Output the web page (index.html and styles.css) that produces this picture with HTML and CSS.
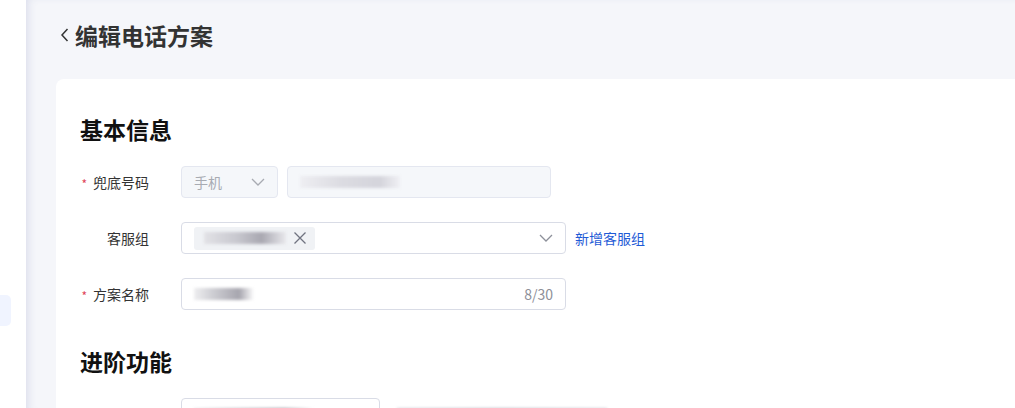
FILE: index.html
```html
<!DOCTYPE html>
<html lang="zh-CN">
<head>
  <meta charset="UTF-8">
  <meta name="viewport" content="width=device-width, initial-scale=1.0">
  <title>编辑电话方案</title>
  <link rel="stylesheet" href="styles.css">
</head>
<body>
  <div class="layout">
    <!-- 左侧菜单（收起状态） -->
    <aside class="sidebar">
      <div class="menu-active"></div>
    </aside>

    <main class="content">
      <div class="page-header">
        <svg class="back-icon" width="10" height="16" viewBox="0 0 10 16">
          <path d="M7.5 2 L2 8 L7.5 14" fill="none" stroke="#333" stroke-width="1.5"/>
        </svg>
        <h1>编辑电话方案</h1>
      </div>

      <section class="card">
        <h2>基本信息</h2>

        <div class="form-item">
          <label class="form-label"><span class="required">*</span>兜底号码</label>
          <div class="form-field">
            <div class="select select-phone is-disabled">
              <span class="select-text">手机</span>
              <svg class="arrow" width="14" height="8" viewBox="0 0 14 8">
                <path d="M1 1 L7 7 L13 1" fill="none" stroke="#a8abb2" stroke-width="1.3"/>
              </svg>
            </div>
            <div class="input input-number is-disabled">
              <span class="blur-text blur-light" style="width: 100px"></span>
            </div>
          </div>
        </div>

        <div class="form-item">
          <label class="form-label">客服组</label>
          <div class="form-field">
            <div class="select select-wide">
              <span class="tag">
                <span class="blur-text" style="width: 82px"></span>
                <svg class="tag-close" width="14" height="14" viewBox="0 0 14 14">
                  <path d="M1.5 1.5 L12.5 12.5 M12.5 1.5 L1.5 12.5" fill="none" stroke="#707380" stroke-width="1.3"/>
                </svg>
              </span>
              <svg class="arrow" width="14" height="8" viewBox="0 0 14 8">
                <path d="M1 1 L7 7 L13 1" fill="none" stroke="#8d909a" stroke-width="1.3"/>
              </svg>
            </div>
            <a class="link" href="#">新增客服组</a>
          </div>
        </div>

        <div class="form-item">
          <label class="form-label"><span class="required">*</span>方案名称</label>
          <div class="form-field">
            <div class="input input-wide">
              <span class="blur-text blur-dark" style="width: 60px"></span>
              <span class="count">8/30</span>
            </div>
          </div>
        </div>

        <h2 class="section-gap">进阶功能</h2>

        <div class="form-item">
          <label class="form-label"></label>
          <div class="form-field">
            <div class="input input-small">
              <span class="blur-text blur-dark" style="width: 120px"></span>
            </div>
            <span class="blur-text blur-tip" style="width: 210px"></span>
          </div>
        </div>
      </section>
    </main>
  </div>
</body>
</html>
```

FILE: styles.css
```css
* {
  box-sizing: border-box;
  margin: 0;
  padding: 0;
}

body {
  font-family: "Noto Sans CJK SC", "Noto Sans", sans-serif;
  color: #333;
  background-color: #fff;
  overflow: hidden;
}

.layout {
  display: flex;
  height: 408px;
}

/* 侧边栏 */
.sidebar {
  width: 26px;
  flex-shrink: 0;
  background-color: #fff;
  padding-top: 295px;
}

.menu-active {
  width: 11px;
  height: 31px;
  background-color: #f0f4ff;
  border-radius: 0 5px 5px 0;
}

/* 内容区 */
.content {
  flex: 1;
  background-color: #f5f6fa;
  padding: 20px 0 0 30px;
  box-shadow: inset 8px 2px 8px -6px rgba(200, 203, 225, 0.6);
  overflow: hidden;
}

.page-header {
  display: flex;
  align-items: center;
  height: 30px;
  margin-bottom: 29px;
}

.back-icon {
  margin: 0 5px 0 4px;
}

.page-header h1 {
  font-size: 23px;
  font-weight: bold;
  color: #333;
  line-height: 30px;
}

.card {
  background-color: #fff;
  border-radius: 8px 0 0 0;
  padding: 34px 24px 0;
  height: 400px;
}

.card h2 {
  font-size: 23px;
  font-weight: bold;
  color: #111;
  line-height: 32px;
  margin-bottom: 21px;
}

.card h2.section-gap {
  margin-top: 35px;
}

/* 表单 */
.form-item {
  display: flex;
  align-items: center;
  height: 32px;
  margin-bottom: 24px;
}

.form-label {
  width: 69px;
  margin-right: 32px;
  display: flex;
  align-items: center;
  justify-content: flex-end;
  font-size: 14px;
  color: #333;
  white-space: nowrap;
}

.required {
  color: #e0455a;
  font-size: 12px;
  line-height: 12px;
  height: 8px;
  margin-right: 6px;
}

.form-field {
  display: flex;
  align-items: center;
  gap: 9px;
}

.select,
.input {
  height: 32px;
  border: 1px solid #d9dce6;
  border-radius: 4px;
  background-color: #fff;
  display: flex;
  align-items: center;
  padding: 0 12px;
  font-size: 14px;
}

.is-disabled {
  background-color: #f5f7fa;
  border-color: #e4e7f0;
  color: #a8abb2;
}

.select-phone {
  width: 97px;
  justify-content: space-between;
}

.select-text {
  color: #a8abb2;
}

.input-number {
  width: 264px;
}

.select-wide {
  width: 385px;
  justify-content: space-between;
  padding-left: 12px;
}

.tag {
  display: flex;
  align-items: center;
  gap: 7px;
  height: 23px;
  padding: 0 8px 0 10px;
  background-color: #f0f2f5;
  border-radius: 3px;
}

.link {
  color: #1f5bd6;
  font-size: 14px;
  text-decoration: none;
}

.input-wide {
  width: 385px;
  justify-content: space-between;
}

.count {
  color: #8e9099;
  font-size: 14px;
}

.input-small {
  width: 199px;
}

/* 打码的内容 */
.blur-text {
  display: inline-block;
  height: 12px;
  background: linear-gradient(90deg, #e2e2e6, #c8c8cf 40%, #a9a8b1 70%, #e8e8ec);
  filter: blur(1.5px);
}

.blur-light {
  background: linear-gradient(90deg, #eeeef2, #dcdce2 40%, #d4d4db 80%, #f0f0f4);
}

.blur-dark {
  background: linear-gradient(90deg, #eeeef0, #cfcfd4 30%, #a6a5ae 75%, #ffffff);
}

.blur-tip {
  margin-left: 8px;
  background: linear-gradient(90deg, #d8d9e0, #c2c4cc 50%, #d8d9e0);
}
```
